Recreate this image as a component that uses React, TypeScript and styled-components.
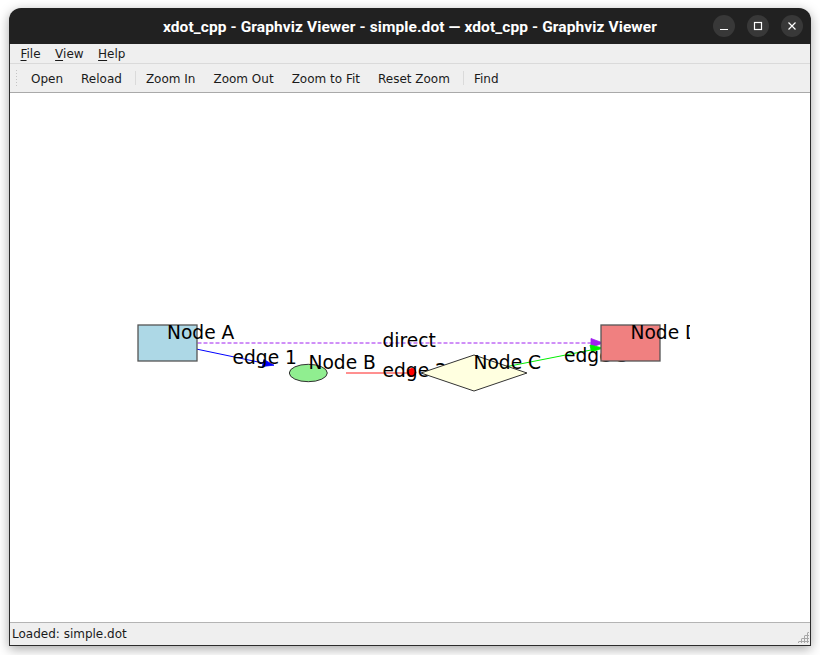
import React from "react";
import styled, { createGlobalStyle } from "styled-components";

const GlobalStyle = createGlobalStyle`
  html, body { margin: 0; padding: 0; background: #ffffff; }
  body { font-family: "DejaVu Sans", "Noto Sans", sans-serif; }
`;

const Page = styled.div`
  padding: 8px 0 0 9px;
  width: 820px;
  height: 655px;
  box-sizing: border-box;
  overflow: hidden;
`;

const Window = styled.div`
  width: 802px;
  display: flex;
  flex-direction: column;
  border-radius: 12px 12px 0 0;
  overflow: hidden;
  background: #efefef;
  box-shadow: 0 3px 12px rgba(0, 0, 0, 0.35);
`;

const TitleBar = styled.div`
  height: 36px;
  background: #212121;
  display: grid;
  grid-template-columns: 1fr auto 1fr;
  align-items: center;
`;

const Title = styled.div`
  grid-column: 2;
  color: #ffffff;
  font-family: Roboto, "Noto Sans", sans-serif;
  font-weight: 700;
  font-size: 15.5px;
  letter-spacing: 0.1px;
  white-space: nowrap;
  padding-top: 1px;
`;

const WinButtons = styled.div`
  grid-column: 3;
  justify-self: end;
  display: flex;
  gap: 12px;
  padding-right: 8px;
`;

const WinButton = styled.div`
  width: 22px;
  height: 22px;
  border-radius: 50%;
  background: #383838;
  display: flex;
  align-items: center;
  justify-content: center;
`;

const Body = styled.div`
  display: flex;
  flex-direction: column;
  border: 1px solid #2c2c2c;
  border-top: none;
`;

const MenuBar = styled.div`
  height: 19px;
  display: flex;
  align-items: center;
  padding-left: 3px;
  border-bottom: 1px solid #dadada;
  background: #efefef;
  font-size: 12px;
  color: #1a1a1a;
`;

const MenuItem = styled.span`
  padding: 1px 7px 0 7.5px;
  line-height: 19px;
`;

const Mnemonic = styled.span`
  text-decoration: underline;
  text-underline-offset: 2px;
`;

const ToolBar = styled.div`
  height: 28px;
  display: flex;
  align-items: center;
  padding-left: 5px;
  background: #efefef;
  font-size: 12px;
  color: #1a1a1a;
`;

const Grip = styled.div`
  width: 4px;
  height: 18px;
  margin-right: 3px;
  background-image: radial-gradient(circle, #c4c4c4 0.8px, transparent 1px);
  background-size: 3px 3px;
`;

const ToolButton = styled.span`
  padding: 1px 9px 0;
  line-height: 28px;
`;

const Separator = styled.div`
  width: 1px;
  height: 14px;
  background: #dadada;
  margin: 0 1px 0 4px;
`;

const Canvas = styled.div`
  height: 529px;
  background: #ffffff;
  border-top: 1px solid #a9a9a9;
  display: flex;
`;

const StatusBar = styled.div`
  height: 22px;
  border-top: 1px solid #b4b4b4;
  display: flex;
  align-items: center;
  justify-content: space-between;
  padding-left: 2px;
  font-size: 12px;
  color: #1a1a1a;
  background: #efefef;
`;

const SizeGrip = styled.div`
  align-self: flex-end;
  width: 12px;
  height: 12px;
  margin: 0 1px 2px 0;
  background-image: radial-gradient(circle, #a8a8a8 1px, transparent 1.2px);
  background-size: 3px 3px;
  clip-path: polygon(100% 0, 100% 100%, 0 100%);
`;

const GraphText = styled.text`
  font-family: "DejaVu Sans", sans-serif;
  font-size: 18.67px;
  fill: #000000;
`;

function Graph() {
  return (
    <svg width={800} height={529} viewBox="10 93 800 529">
      <defs>
        <clipPath id="gclip">
          <rect x={10} y={93} width={680} height={529} />
        </clipPath>
      </defs>
      <g clipPath="url(#gclip)">
        {/* edges */}
        <line x1={167.5} y1={343} x2={591} y2={343} stroke="#a020f0" strokeWidth={1} strokeDasharray="4,2" />
        <polygon points="603,343 591,338.5 591,347.5" fill="#a020f0" stroke="#a020f0" strokeWidth={0.8} />
        <GraphText x={382.5} y={347}>direct</GraphText>

        <line x1={167.5} y1={343} x2={263} y2={363} stroke="#0000ff" strokeWidth={1} />
        <polygon points="274,365.2 263.8,359.6 262.4,366.4" fill="#0000ff" stroke="#0000ff" strokeWidth={0.8} />
        <GraphText x={232.5} y={364}>edge 1</GraphText>

        <line x1={346} y1={373} x2={410} y2={373} stroke="#ff2020" strokeWidth={1} />
        <circle cx={412} cy={372.5} r={4} fill="#ff0000" stroke="#ff0000" />
        <GraphText x={382.5} y={377}>edge 2</GraphText>

        <line x1={474.5} y1={373} x2={591} y2={350} stroke="#00ee00" strokeWidth={1} />
        <polygon points="603,348 590,345 591.5,352" fill="#00ee00" stroke="#00ee00" strokeWidth={0.8} />
        <GraphText x={564} y={362}>edge 3</GraphText>

        {/* nodes */}
        <rect x={138} y={325} width={59} height={36} fill="#add8e6" stroke="#555555" strokeWidth={1.3} />
        <GraphText x={167} y={339}>Node A</GraphText>

        <ellipse cx={308.3} cy={373} rx={19} ry={8.7} fill="#90ee90" stroke="#333333" strokeWidth={1} />
        <GraphText x={308.5} y={369}>Node B</GraphText>

        <polygon points="474,355 527,373 474,391 421,373" fill="#ffffe0" stroke="#333333" strokeWidth={1} />
        <GraphText x={473.5} y={369}>Node C</GraphText>

        <rect x={601} y={325} width={59} height={36} fill="#f08080" stroke="#555555" strokeWidth={1.3} />
        <GraphText x={630.5} y={339}>Node D</GraphText>
      </g>
    </svg>
  );
}

export default function App() {
  return (
    <>
      <GlobalStyle />
      <Page>
        <Window>
          <TitleBar>
            <Title>xdot_cpp - Graphviz Viewer - simple.dot — xdot_cpp - Graphviz Viewer</Title>
            <WinButtons>
              <WinButton>
                <svg width="10" height="10" viewBox="0 0 10 10">
                  <line x1="1" y1="8.5" x2="9" y2="8.5" stroke="#fff" strokeWidth="1.2" />
                </svg>
              </WinButton>
              <WinButton>
                <svg width="10" height="10" viewBox="0 0 10 10">
                  <rect x="1.5" y="1.5" width="7" height="7" fill="none" stroke="#fff" strokeWidth="1.2" />
                </svg>
              </WinButton>
              <WinButton>
                <svg width="10" height="10" viewBox="0 0 10 10">
                  <path d="M1.5 1.5 L8.5 8.5 M8.5 1.5 L1.5 8.5" stroke="#fff" strokeWidth="1.2" />
                </svg>
              </WinButton>
            </WinButtons>
          </TitleBar>
          <Body>
            <MenuBar>
              <MenuItem><Mnemonic>F</Mnemonic>ile</MenuItem>
              <MenuItem><Mnemonic>V</Mnemonic>iew</MenuItem>
              <MenuItem><Mnemonic>H</Mnemonic>elp</MenuItem>
            </MenuBar>
            <ToolBar>
              <Grip />
              <ToolButton>Open</ToolButton>
              <ToolButton>Reload</ToolButton>
              <Separator />
              <ToolButton>Zoom In</ToolButton>
              <ToolButton>Zoom Out</ToolButton>
              <ToolButton>Zoom to Fit</ToolButton>
              <ToolButton>Reset Zoom</ToolButton>
              <Separator />
              <ToolButton>Find</ToolButton>
            </ToolBar>
            <Canvas>
              <Graph />
            </Canvas>
            <StatusBar>
              <span>Loaded: simple.dot</span>
              <SizeGrip />
            </StatusBar>
          </Body>
        </Window>
      </Page>
    </>
  );
}
